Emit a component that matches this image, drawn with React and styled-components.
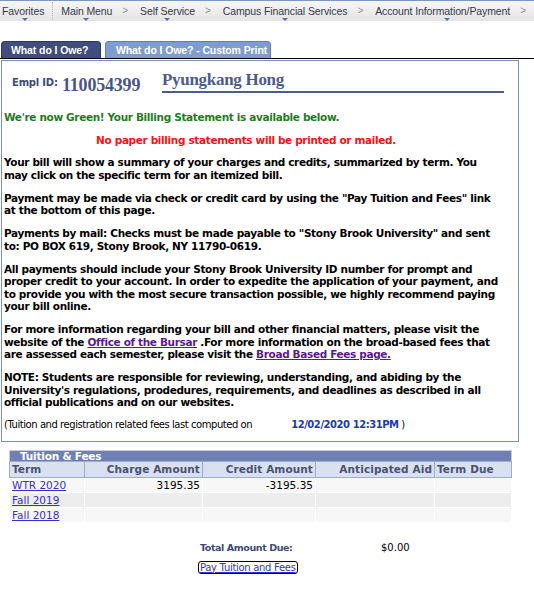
import React from 'react';
import styled, { createGlobalStyle } from 'styled-components';

const GlobalStyle = createGlobalStyle`
  body {
    margin: 0;
    background: #ffffff;
    font-family: "DejaVu Sans", Verdana, sans-serif;
  }
`;

const Page = styled.div`
  width: 534px;
  overflow: hidden;
`;

const NavBar = styled.div`
  display: flex;
  align-items: flex-start;
  height: 20px;
  border-top: 1px solid #7d97c4;
  background: linear-gradient(#f6f6f6, #e4e4e4);
  white-space: nowrap;
  font-family: "Liberation Sans", Arial, sans-serif;
  font-size: 10.5px;
  letter-spacing: -0.1px;
  color: #333a4a;
`;

const NavItem = styled.span`
  position: relative;
  padding: 4px 0 0;
  margin-left: ${(p) => p.$ml || 0}px;
  &::after {
    content: '';
    position: absolute;
    left: ${(p) => p.$arrow || 20}px;
    top: 17px;
    border-left: 3px solid transparent;
    border-right: 3px solid transparent;
    border-top: 3px solid #4a73b5;
  }
`;

const NavDivider = styled.span`
  width: 0;
  height: 18px;
  margin: 1px 0 0 8px;
  border-left: 1px dotted #b8b8b8;
`;

const NavArrow = styled.span`
  padding: 4px 0 0;
  margin-left: ${(p) => p.$ml || 0}px;
  color: #8a8f99;
  font-size: 10px;
`;

const TabStrip = styled.div`
  display: flex;
  gap: 4px;
  margin-top: 20px;
  padding-left: 1px;
  border-bottom: 1px solid #000000;
`;

const Tab = styled.div`
  height: 17px;
  padding: 0 0 0 ${(p) => (p.$active ? 9 : 10)}px;
  width: ${(p) => p.$w}px;
  box-sizing: border-box;
  border-radius: 4px 4px 0 0;
  border: 1px solid ${(p) => (p.$active ? '#2e3760' : '#5f7fb5')};
  border-bottom: none;
  background: ${(p) => (p.$active ? '#414d7c' : '#7e9ccd')};
  color: #ffffff;
  font-family: "Liberation Sans", Arial, sans-serif;
  font-weight: bold;
  font-size: 10.5px;
  letter-spacing: -0.1px;
  line-height: 17px;
  white-space: nowrap;
`;

const Panel = styled.div`
  width: 518px;
  margin: 1px 0 0 1px;
  box-sizing: border-box;
  border: 1px solid #7a90bd;
  padding: 8px 14px 9px 2px;
  font-size: 10.5px;
  letter-spacing: -0.35px;
  font-weight: bold;
  line-height: 12.5px;
  color: #000000;
`;

const IdRow = styled.div`
  display: flex;
  align-items: flex-end;
  margin-bottom: 18px;
`;

const IdLabel = styled.span`
  margin-left: 8px;
  width: 50px;
  color: #3b4a7a;
  font-size: 10px;
  letter-spacing: -0.2px;
  padding-bottom: 4px;
`;

const IdValue = styled.span`
  width: 100px;
  color: #4a5585;
  font-family: "Liberation Serif", Georgia, serif;
  font-size: 18px;
  letter-spacing: -0.2px;
  padding-bottom: 2px;
`;

const NameLine = styled.div`
  flex: 1;
  border-bottom: 2px solid #4d5b8c;
  color: #4d5b8c;
  font-family: "Liberation Serif", Georgia, serif;
  font-size: 17px;
  letter-spacing: -0.3px;
  line-height: 22px;
`;

const GreenNote = styled.p`
  margin: 0 0 10px;
  color: #1f7d1f;
`;

const RedNote = styled.p`
  margin: 0 0 10px;
  padding-right: 16px;
  text-align: center;
  color: #ff1010;
`;

const Para = styled.p`
  margin: 0 0 10.5px;
`;

const Link = styled.a`
  color: ${(p) => (p.$visited ? '#5a1a8c' : '#3333cc')};
  text-decoration: underline;
`;

const Computed = styled.p`
  display: flex;
  margin: 0;
  font-weight: normal;
  font-size: 10px;
  letter-spacing: -0.45px;
`;

const StampDate = styled.span`
  margin-left: 39px;
  color: #1c3aa8;
  font-weight: bold;
`;

const Table = styled.table`
  width: 503px;
  margin: 8px 0 0 9px;
  border-collapse: collapse;
  border: 1px solid #c4cbe0;
  font-size: 10.5px;
  line-height: 12px;
`;

const Caption = styled.th`
  height: 10px;
  padding: 0 0 0 10px;
  background: #7080b4;
  color: #ffffff;
  text-align: left;
  line-height: 10px;
  letter-spacing: -0.2px;
`;

const HeadCell = styled.th`
  height: 15px;
  padding: 0 2px;
  background: #dae1ee;
  border: 1px solid #9cadd2;
  color: #4a5170;
  text-align: ${(p) => (p.$left ? 'left' : 'right')};
  letter-spacing: 0.1px;
  width: ${(p) => p.$w}px;
  white-space: nowrap;
`;

const Cell = styled.td`
  height: 14px;
  padding: 0 2px;
  background: ${(p) => (p.$alt ? '#ededed' : '#f7f7f7')};
  border: 1px solid #ffffff;
  text-align: ${(p) => (p.$left ? 'left' : 'right')};
  letter-spacing: 0;
  color: #000000;
`;

const Totals = styled.div`
  display: grid;
  grid-template-columns: 181px auto;
  margin: 19px 0 0 200px;
  font-size: 10px;
  line-height: 12px;
`;

const TotalLabel = styled.span`
  font-weight: bold;
  font-size: 9.5px;
  letter-spacing: -0.4px;
  color: #3b4a7a;
`;

const PayLink = styled.a`
  justify-self: start;
  margin-top: 7px;
  margin-left: -2px;
  padding: 0 1px;
  border: 1px solid #000;
  border-radius: 3px;
  color: #3333cc;
  text-decoration: underline;
  line-height: 11px;
  letter-spacing: -0.3px;
`;

const rows = [
  { term: 'WTR 2020', charge: '3195.35', credit: '-3195.35' },
  { term: 'Fall 2019', charge: '', credit: '' },
  { term: 'Fall 2018', charge: '', credit: '' },
];

const App = () => (
  <Page>
    <GlobalStyle />
    <NavBar>
      <NavItem $ml={2} $arrow={20}>Favorites</NavItem>
      <NavDivider />
      <NavItem $ml={8} $arrow={22}>Main Menu</NavItem>
      <NavArrow $ml={10}>&gt;</NavArrow>
      <NavItem $ml={12} $arrow={24}>Self Service</NavItem>
      <NavArrow $ml={10}>&gt;</NavArrow>
      <NavItem $ml={12} $arrow={59}>Campus Financial Services</NavItem>
      <NavArrow $ml={10}>&gt;</NavArrow>
      <NavItem $ml={12} $arrow={69}>Account Information/Payment</NavItem>
      <NavArrow $ml={10}>&gt;</NavArrow>
    </NavBar>

    <TabStrip>
      <Tab $active $w={100}>What do I Owe?</Tab>
      <Tab $w={166}>What do I Owe? - Custom Print</Tab>
    </TabStrip>

    <Panel>
      <IdRow>
        <IdLabel>Empl ID:</IdLabel>
        <IdValue>110054399</IdValue>
        <NameLine>Pyungkang Hong</NameLine>
      </IdRow>

      <GreenNote>We're now Green! Your Billing Statement is available below.</GreenNote>
      <RedNote>No paper billing statements will be printed or mailed.</RedNote>

      <Para>
        Your bill will show a summary of your charges and credits, summarized by term. You<br />
        may click on the specific term for an itemized bill.
      </Para>
      <Para>
        Payment may be made via check or credit card by using the "Pay Tuition and Fees" link<br />
        at the bottom of this page.
      </Para>
      <Para>
        Payments by mail: Checks must be made payable to "Stony Brook University" and sent<br />
        to: PO BOX 619, Stony Brook, NY 11790-0619.
      </Para>
      <Para>
        All payments should include your Stony Brook University ID number for prompt and<br />
        proper credit to your account. In order to expedite the application of your payment, and<br />
        to provide you with the most secure transaction possible, we highly recommend paying<br />
        your bill online.
      </Para>
      <Para>
        For more information regarding your bill and other financial matters, please visit the<br />
        website of the <Link $visited href="#">Office of the Bursar</Link> .For more information on the broad-based fees that<br />
        are assessed each semester, please visit the <Link $visited href="#">Broad Based Fees page.</Link>
      </Para>
      <Para>
        NOTE: Students are responsible for reviewing, understanding, and abiding by the<br />
        University's regulations, prodedures, requirements, and deadlines as described in all<br />
        official publications and on our websites.
      </Para>
      <Computed>
        <span>(Tuition and registration related fees last computed on</span>
        <StampDate>12/02/2020 12:31PM</StampDate>
        <span>&nbsp;)</span>
      </Computed>
    </Panel>

    <Table>
      <thead>
        <tr>
          <Caption colSpan={5}>Tuition &amp; Fees</Caption>
        </tr>
        <tr>
          <HeadCell $left $w={70}>Term</HeadCell>
          <HeadCell $w={113}>Charge Amount</HeadCell>
          <HeadCell $w={108}>Credit Amount</HeadCell>
          <HeadCell $w={114}>Anticipated Aid</HeadCell>
          <HeadCell $left>Term Due</HeadCell>
        </tr>
      </thead>
      <tbody>
        {rows.map((r, i) => (
          <tr key={r.term}>
            <Cell $left $alt={i === 1}><Link href="#">{r.term}</Link></Cell>
            <Cell $alt={i === 1}>{r.charge}</Cell>
            <Cell $alt={i === 1}>{r.credit}</Cell>
            <Cell $alt={i === 1}></Cell>
            <Cell $alt={i === 1}></Cell>
          </tr>
        ))}
      </tbody>
    </Table>

    <Totals>
      <TotalLabel>Total Amount Due:</TotalLabel>
      <span>$0.00</span>
      <PayLink href="#">Pay Tuition and Fees</PayLink>
    </Totals>
  </Page>
);

export default App;
